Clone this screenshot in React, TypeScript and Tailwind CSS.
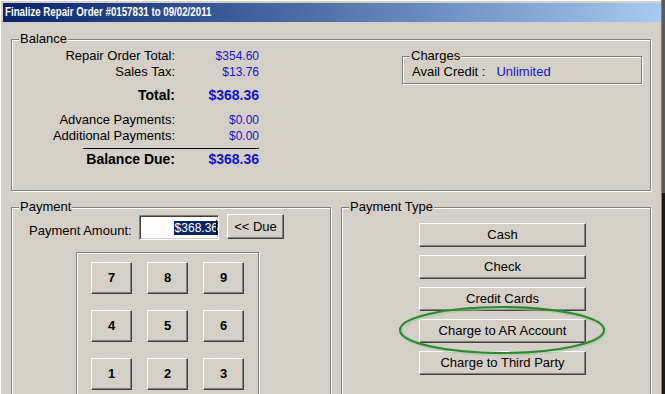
import React from "react";

function Group({
  label,
  className,
  children,
}: {
  label?: string;
  className: string;
  children?: React.ReactNode;
}) {
  return (
    <div
      className={
        "relative shrink-0 border border-[#808080] shadow-[inset_1px_1px_0_#ffffff,1px_1px_0_#ffffff] " +
        className
      }
    >
      {label && (
        <div className="absolute left-[7px] top-[-9px] px-[1px] bg-[#d4d0c8] text-[13px] leading-[16px] text-black whitespace-nowrap">
          {label}
        </div>
      )}
      {children}
    </div>
  );
}

function WinButton({
  className,
  children,
}: {
  className: string;
  children: React.ReactNode;
}) {
  return (
    <div
      className={
        "flex shrink-0 items-center justify-center bg-[#d4d0c8] border border-t-white border-l-white border-r-[#404040] border-b-[#404040] shadow-[inset_-1px_-1px_0_#808080] text-black whitespace-nowrap " +
        className
      }
    >
      {children}
    </div>
  );
}

function Row({
  label,
  value,
  bold,
  className = "",
}: {
  label: string;
  value: string;
  bold?: boolean;
  className?: string;
}) {
  return (
    <div className={"flex shrink-0 h-[16px] items-center " + className}>
      <div
        className={
          "w-[163px] text-right leading-[16px] " +
          (bold ? "text-[14px] font-bold" : "text-[13px]")
        }
      >
        {label}
      </div>
      <div
        className={
          "w-[84px] text-right leading-[16px] text-[#1414c4] " +
          (bold ? "text-[14px] font-bold" : "text-[12px]")
        }
      >
        {value}
      </div>
    </div>
  );
}

export default function App() {
  const keys = ["7", "8", "9", "4", "5", "6", "1", "2", "3"];
  const types = [
    "Cash",
    "Check",
    "Credit Cards",
    "Charge to AR Account",
    "Charge to Third Party",
  ];
  return (
    <div className="relative w-[665px] h-[394px] overflow-hidden bg-[#d4d0c8] flex font-['Liberation_Sans',Arial,sans-serif] text-black">
      <div className="w-[661px] shrink-0 flex flex-col pl-[3px] pt-[3px] shadow-[inset_1px_1px_0_#ffffff]">
        {/* title bar */}
        <div className="h-[19px] shrink-0 w-[658px] bg-gradient-to-r from-[#0a246a] to-[#a6caf0] flex items-center pl-[2px] overflow-hidden">
          <span className="text-white font-bold text-[12px] leading-[19px] whitespace-nowrap origin-left scale-x-[0.81]">
            Finalize Repair Order #0157831 to 09/02/2011
          </span>
        </div>

        <div className="pl-[8px] pt-[17px] flex flex-col shrink-0">
          {/* Balance */}
          <Group label="Balance" className="w-[640px] h-[152px] flex">
            <div className="flex flex-col pt-[8px] w-[247px]">
              <Row label="Repair Order Total:" value="$354.60" />
              <Row label="Sales Tax:" value="$13.76" />
              <Row label="Total:" value="$368.36" bold className="mt-[7px]" />
              <Row label="Advance Payments:" value="$0.00" className="mt-[9px]" />
              <Row label="Additional Payments:" value="$0.00" />
              <div className="ml-[71px] mt-[4px] w-[176px] h-[1px] shrink-0 bg-black" />
              <Row label="Balance Due:" value="$368.36" bold className="mt-[2px]" />
            </div>
            <Group label="Charges" className="ml-auto mr-[8px] mt-[16px] w-[240px] h-[28px]">
              <div className="flex pl-[9px] pt-[7px] text-[13px] leading-[16px]">
                <span>Avail Credit :</span>
                <span className="ml-[11px] text-[#1414c4]">Unlimited</span>
              </div>
            </Group>
          </Group>

          <div className="flex shrink-0 mt-[16px] gap-[10px]">
            {/* Payment */}
            <Group label="Payment" className="w-[320px] h-[200px] flex flex-col">
              <div className="flex shrink-0 items-start pt-[7px] pl-[17px]">
                <span className="mt-[8px] text-[13px] leading-[16px] w-[103px] whitespace-nowrap">
                  Payment Amount:
                </span>
                <div className="ml-[7px] w-[80px] h-[25px] bg-white border border-t-[#808080] border-l-[#808080] border-r-white border-b-white shadow-[inset_1px_1px_0_#404040,inset_-1px_-1px_0_#d4d0c8] flex items-center justify-end pr-[1px] overflow-hidden">
                  <span className="bg-[#0a246a] text-white text-[12px] leading-[14px] pl-[1px]">
                    $368.36
                  </span>
                  <span className="w-[1px] h-[15px] bg-black -ml-[2px]" />
                </div>
                <WinButton className="ml-[8px] -mt-[1px] w-[57px] h-[25px] text-[13px]">
                  {"<< Due"}
                </WinButton>
              </div>
              <Group className="ml-[64px] mt-[12px] w-[183px] h-[160px]">
                <div className="grid grid-cols-[41px_41px_41px] gap-x-[15px] gap-y-[16px] pl-[14px] pt-[9px]">
                  {keys.map((k) => (
                    <WinButton key={k} className="h-[32px] text-[13px] font-bold">
                      {k}
                    </WinButton>
                  ))}
                </div>
              </Group>
            </Group>

            {/* Payment Type */}
            <Group label="Payment Type" className="w-[310px] h-[200px]">
              <div className="flex flex-col gap-[8px] pl-[77px] pt-[15px]">
                {types.map((t) => (
                  <WinButton key={t} className="w-[167px] h-[24px] text-[13px]">
                    {t}
                  </WinButton>
                ))}
              </div>
            </Group>
          </div>
        </div>
      </div>

      {/* right window edge */}
      <div className="w-[4px] shrink-0 flex flex-col">
        <div className="h-[193px] shrink-0 bg-[#5a5a5a] border-l border-[#808080]" />
        <div className="flex-1 bg-[#1a1a1a] border-l border-[#808080]" />
      </div>

      {/* green highlight ellipse */}
      <svg
        className="absolute left-[398px] top-[305px]"
        width="210"
        height="52"
        viewBox="0 0 210 52"
      >
        <ellipse cx="105" cy="26" rx="102" ry="23" fill="none" stroke="#9cc79c" strokeWidth="4" opacity="0.5" />
        <ellipse cx="104" cy="25" rx="102" ry="23" fill="none" stroke="#2f8a2f" strokeWidth="2.2" />
      </svg>
    </div>
  );
}
